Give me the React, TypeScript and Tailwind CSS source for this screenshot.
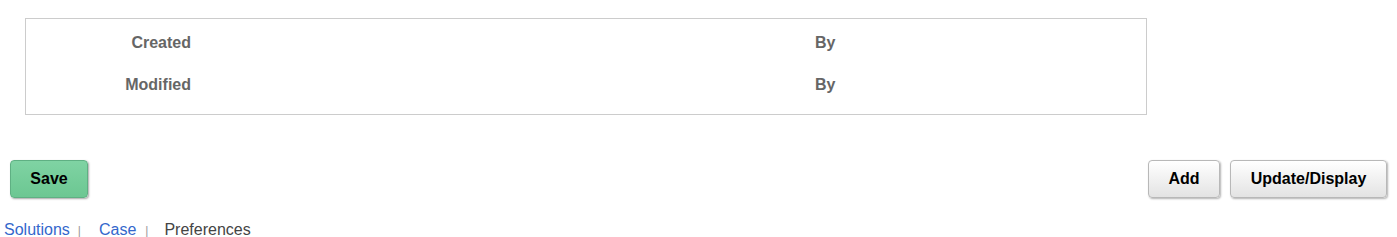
import React from "react";

const rows = ["Created", "Modified"];

export default function App() {
  return (
    <div className="w-[1397px] h-[237px] bg-white font-['Liberation_Sans',Arial,sans-serif] overflow-hidden">
      <div className="pt-[18px] pl-[25px]">
        <div className="w-[1122px] h-[97px] border border-[#cccccc] pt-[12px] flex flex-col gap-[18px]">
          {rows.map((label) => (
            <div key={label} className="flex h-[24px] items-center text-[16px] font-bold text-[#666666] leading-[24px]">
              <div className="w-[165px] text-right">{label}</div>
              <div className="ml-[624px]">By</div>
            </div>
          ))}
        </div>
      </div>

      <div className="mt-[45px] flex items-start justify-between pl-[10px] pr-[10px]">
        <button className="w-[78px] h-[38px] rounded-[4px] border border-[#5fb083] bg-gradient-to-b from-[#7fd3a3] to-[#6cc792] shadow-[1px_1px_2px_rgba(0,0,0,0.35)] text-[16px] font-bold text-black">
          Save
        </button>
        <div className="flex gap-[10px]">
          <button className="w-[72px] h-[38px] rounded-[4px] border border-[#b8b8b8] bg-gradient-to-b from-white to-[#e3e3e3] shadow-[1px_1px_2px_rgba(0,0,0,0.3)] text-[16px] font-bold text-black">
            Add
          </button>
          <button className="w-[157px] h-[38px] rounded-[4px] border border-[#b8b8b8] bg-gradient-to-b from-white to-[#e3e3e3] shadow-[1px_1px_2px_rgba(0,0,0,0.3)] text-[16px] font-bold text-black">
            Update/Display
          </button>
        </div>
      </div>

      <div className="mt-[23px] pl-[4px] flex items-baseline text-[16px] leading-[18px]">
        <a className="text-[#3467cc]">Solutions</a>
        <span className="ml-[8px] mr-[18px] text-[12px] text-[#999999]">|</span>
        <a className="text-[#3467cc]">Case</a>
        <span className="ml-[9px] mr-[16px] text-[12px] text-[#999999]">|</span>
        <span className="text-[#444444]">Preferences</span>
      </div>
    </div>
  );
}
